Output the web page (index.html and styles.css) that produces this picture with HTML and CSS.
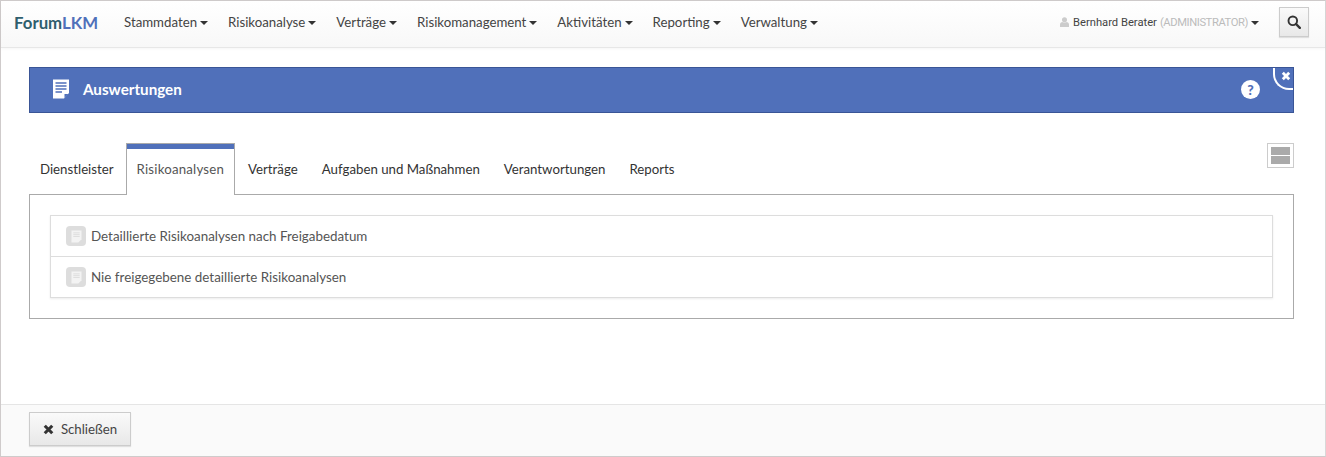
FILE: index.html
```html
<!DOCTYPE html>
<html lang="de">
<head>
<meta charset="utf-8">
<title>Auswertungen</title>
<link rel="stylesheet" href="styles.css">
</head>
<body>
<div class="app">
  <nav class="navbar">
    <a class="brand"><span class="brand-a">Forum</span><span class="brand-b">LKM</span></a>
    <ul class="menu">
      <li>Stammdaten<i class="caret"></i></li>
      <li>Risikoanalyse<i class="caret"></i></li>
      <li>Verträge<i class="caret"></i></li>
      <li>Risikomanagement<i class="caret"></i></li>
      <li>Aktivitäten<i class="caret"></i></li>
      <li>Reporting<i class="caret"></i></li>
      <li>Verwaltung<i class="caret"></i></li>
    </ul>
    <div class="user">
      <svg class="user-icon" viewBox="0 0 10 11" width="9" height="10"><circle cx="5" cy="3" r="2.8" fill="#ccc"/><path d="M0 11V8.2C0 6.6 1.4 6 2.6 5.6 3.4 6.3 6.6 6.3 7.4 5.6 8.6 6 10 6.6 10 8.2V11Z" fill="#ccc"/></svg>
      <span class="user-name">Bernhard Berater</span>
      <span class="user-role">(ADMINISTRATOR)</span>
      <i class="caret"></i>
    </div>
    <button class="search-btn" aria-label="Suchen">
      <svg viewBox="0 0 14 14" width="14" height="14"><circle cx="5.8" cy="5.8" r="4.3" fill="none" stroke="#333" stroke-width="1.9"/><path d="M9 9l3.8 3.8" stroke="#333" stroke-width="2.4" stroke-linecap="round"/></svg>
    </button>
  </nav>

  <main class="content">
    <header class="banner">
      <svg class="banner-icon" viewBox="0 0 18 20" width="18" height="20"><path d="M1 0.5H17V14L12 19.5H1Z" fill="#fff"/><path d="M3.5 4H14.5M3.5 7H14.5M3.5 10H14.5M3.5 13H10" stroke="#5070ba" stroke-width="1.4"/><path d="M12.5 19V15H16.5Z" fill="#5070ba"/></svg>
      <h1 class="banner-title">Auswertungen</h1>
      <span class="help">?</span>
      <span class="banner-close">
        <svg viewBox="0 0 10 10" width="10" height="10"><path d="M1.8 1.8L8.2 8.2M8.2 1.8L1.8 8.2" stroke="#fff" stroke-width="2.8"/></svg>
      </span>
    </header>

    <section class="tabs-area">
      <div class="tabs-row">
        <ul class="tabs">
          <li class="tab">Dienstleister</li>
          <li class="tab active">Risikoanalysen</li>
          <li class="tab">Verträge</li>
          <li class="tab">Aufgaben und Maßnahmen</li>
          <li class="tab">Verantwortungen</li>
          <li class="tab">Reports</li>
        </ul>
        <span class="layout-toggle"><i></i><i></i></span>
      </div>
      <div class="panel">
        <ul class="report-list">
          <li class="report">
            <span class="report-icon"><svg viewBox="0 0 12 14" width="11" height="13"><path d="M0.5 0.5H11.5V10L8 13.5H0.5Z" fill="#f3f3f3"/><path d="M2.5 3H9.5M2.5 5H9.5M2.5 7H9.5" stroke="#dcdcdc" stroke-width="1"/></svg></span>
            Detaillierte Risikoanalysen nach Freigabedatum
          </li>
          <li class="report">
            <span class="report-icon"><svg viewBox="0 0 12 14" width="11" height="13"><path d="M0.5 0.5H11.5V10L8 13.5H0.5Z" fill="#f3f3f3"/><path d="M2.5 3H9.5M2.5 5H9.5M2.5 7H9.5" stroke="#dcdcdc" stroke-width="1"/></svg></span>
            Nie freigegebene detaillierte Risikoanalysen
          </li>
        </ul>
      </div>
    </section>
  </main>

  <footer class="footer">
    <button class="close-btn">
      <svg viewBox="0 0 10 10" width="11" height="11"><path d="M1.6 1.6L8.4 8.4M8.4 1.6L1.6 8.4" stroke="#333" stroke-width="2.8"/></svg>
      Schließen
    </button>
  </footer>
</div>
</body>
</html>
```

FILE: styles.css
```css
* { box-sizing: border-box; }
html, body { margin: 0; height: 100%; }
body { font-family: "Lato", "Noto Sans", sans-serif; font-size: 13.25px; color: #333; background: #fff; }
ul { list-style: none; margin: 0; padding: 0; }

.app {
  height: 457px;
  display: flex;
  flex-direction: column;
  border: 1px solid #cfcbcb;
  border-right-color: #d8d8d8;
}

.navbar {
  height: 47px;
  flex: none;
  display: flex;
  align-items: center;
  padding: 0 16px 4px 13px;
  background: linear-gradient(#fff, #f8f8f8);
  border-bottom: 1px solid #e7e7e7;
  box-shadow: 0 1px 3px rgba(0,0,0,.04);
}
.brand { font-size: 16.8px; font-weight: 700; width: 110px; flex: none; }
.brand-a { color: #2f5f6e; }
.brand-b { color: #5070ba; }
.menu { display: flex; gap: 20px; color: #444; }
.menu li { display: flex; align-items: center; white-space: nowrap; }
.caret {
  display: inline-block;
  width: 0; height: 0;
  margin-left: 3px;
  margin-top: 2px;
  border-top: 4px solid #333;
  border-left: 4px solid transparent;
  border-right: 4px solid transparent;
}
.user { margin-left: auto; display: flex; align-items: center; font-family: "Roboto", sans-serif; font-size: 11.2px; color: #444; margin-right: 20px; }
.user-icon { margin-right: 4px; }
.user-name { margin-right: 3px; }
.user-role { color: #bbb; letter-spacing: -.4px; }
.search-btn {
  width: 30px; height: 30px;
  padding: 0;
  display: flex; align-items: center; justify-content: center;
  background: linear-gradient(#fafafa, #e8e8e8);
  border: 1px solid #ccc;
  box-shadow: 0 1px 1px rgba(0,0,0,.1);
}

.content { flex: 1; padding: 19px 31px 0 28px; }

.banner {
  position: relative;
  height: 46px;
  display: flex;
  align-items: center;
  padding: 0 0 2px 22px;
  background: #5070ba;
  border: 1px solid #3a5596;
  overflow: hidden;
}
.banner-icon { flex: none; margin-right: 13px; }
.banner-title { margin: 0; font-size: 15.2px; font-weight: 700; color: #fff; }
.help {
  margin-left: auto;
  margin-right: 33px;
  width: 19px; height: 19px;
  border-radius: 50%;
  background: #fff;
  color: #5070ba;
  font-size: 14px;
  font-weight: 900;
  line-height: 19px;
  text-align: center;
}
.banner-close {
  position: absolute;
  top: -1px;
  right: -1px;
  width: 21px;
  height: 23px;
  display: flex; align-items: center; justify-content: center;
  padding: 0 0 3px 3px;
  border-left: 2px solid #fff;
  border-bottom: 2px solid #fff;
  border-bottom-left-radius: 16px;
}

.tabs-area { margin-top: 30px; }
.tabs-row { position: relative; }
.tabs { display: flex; height: 51px; }
.tab {
  height: 51px;
  padding: 18px 11px 0;
  white-space: nowrap;
  color: #333;
  margin-right: 2px;
}
.active {
  height: 52px;
  margin-left: -1px;
  background: #fff;
  color: #555;
  letter-spacing: .2px;
  border: 1px solid #aaa;
  border-bottom: 0;
  box-shadow: inset 0 5px 0 #5070ba;
  padding-top: 17px;
  padding-left: 10px;
  padding-right: 10px;
  position: relative;
  z-index: 1;
}
.layout-toggle {
  position: absolute;
  top: 0; right: 0;
  width: 27px; height: 25px;
  border: 1px solid #ccc;
  padding: 3px;
  display: flex;
  flex-direction: column;
  gap: 1px;
}
.layout-toggle i { flex: 1; background: #aaa; }

.panel { border: 1px solid #aaa; padding: 20px; height: 125px; }
.report-list { border: 1px solid #ddd; box-shadow: 0 1px 2px rgba(0,0,0,.08); }
.report {
  height: 40px;
  display: flex;
  align-items: center;
  padding-left: 15px;
  color: #555;
  font-size: 13.4px;
}
.report + .report { height: 41px; border-top: 1px solid #ddd; }
.report-icon {
  width: 20px; height: 20px;
  margin-right: 5px;
  display: flex; align-items: center; justify-content: center;
  background: #ddd;
  border-radius: 4px;
}

.footer {
  height: 52px;
  flex: none;
  padding: 7px 28px 0;
  background: #fafafa;
  border-top: 1px solid #e5e5e5;
}
.close-btn {
  width: 102px; height: 34px;
  display: flex; align-items: center; justify-content: center; gap: 7px;
  padding: 0;
  font: inherit;
  color: #444;
  background: linear-gradient(#fafafa, #e8e8e8);
  border: 1px solid #ccc;
  box-shadow: 0 1px 1px rgba(0,0,0,.1);
}
```
